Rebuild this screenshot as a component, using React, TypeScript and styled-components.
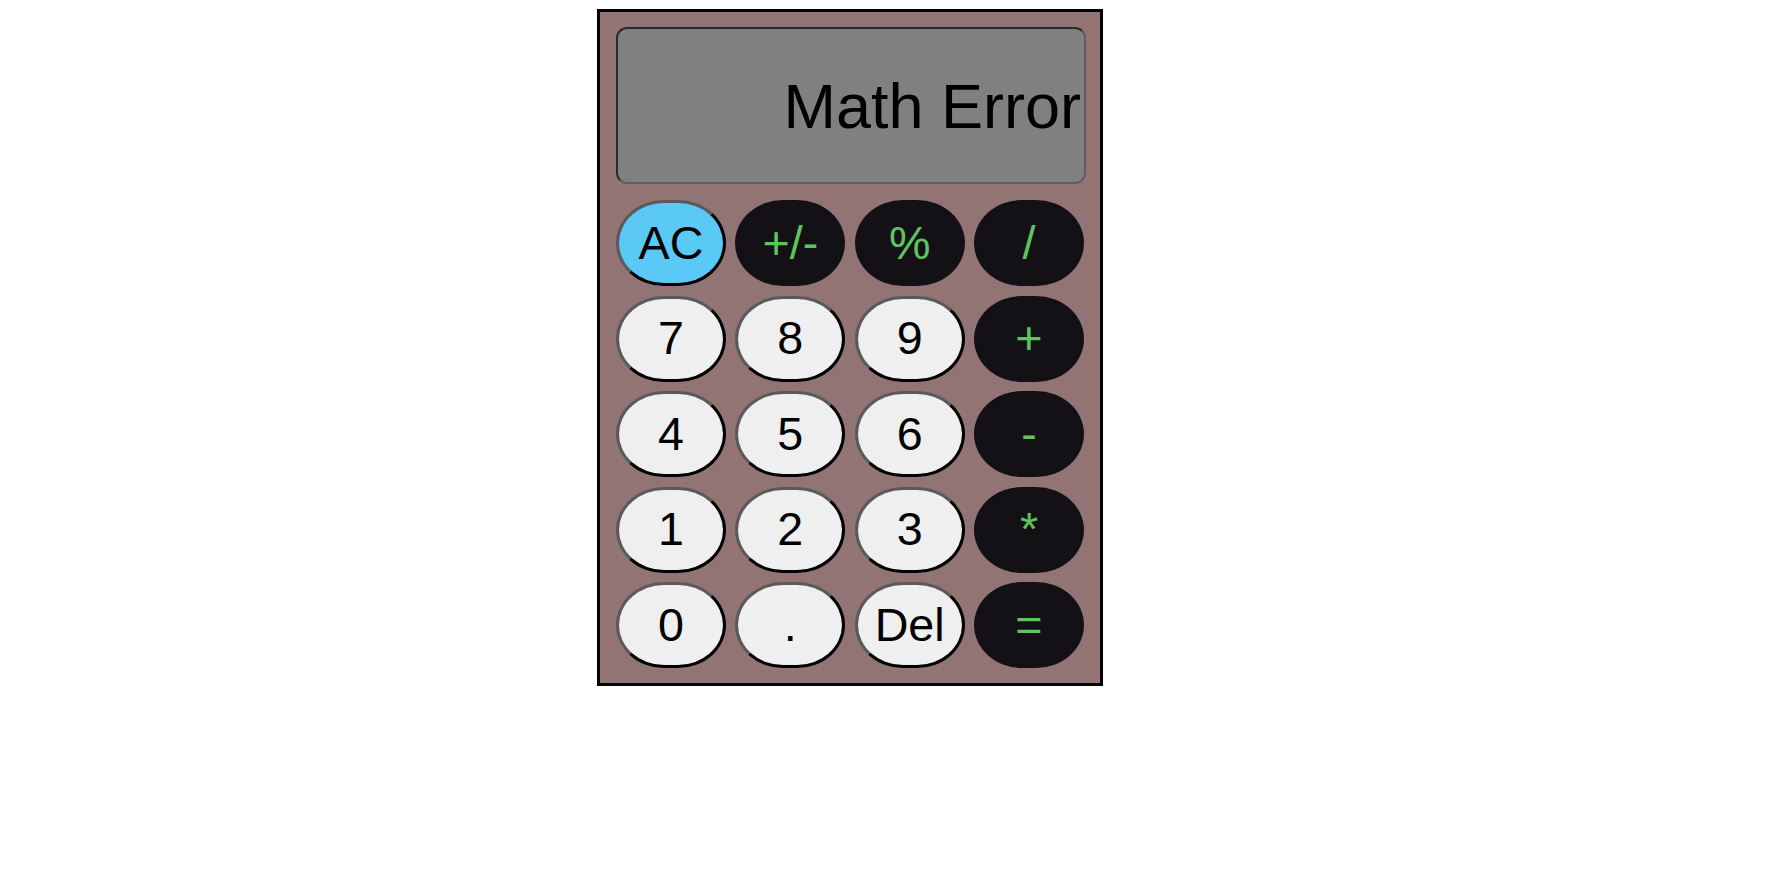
import React from "react";
import styled, { createGlobalStyle } from "styled-components";

const GlobalStyle = createGlobalStyle`
  html, body {
    margin: 0;
    padding: 0;
    background: #ffffff;
  }
  body {
    padding: 9px 0 0 0;
    font-family: "Liberation Sans", Arial, sans-serif;
  }
`;

const Calculator = styled.div`
  box-sizing: border-box;
  margin-left: 597px;
  width: 506px;
  height: 677px;
  border: 3px solid #000;
  background: #917473;
  padding: 15px 14px 14px 16px;
  display: flex;
  flex-direction: column;
  gap: 16px;
`;

const Display = styled.div`
  box-sizing: border-box;
  width: 470px;
  height: 157px;
  background: #808080;
  border-style: solid;
  border-width: 2px;
  border-color: #2a2a2a #5f5f5f #5f5f5f #2a2a2a;
  border-radius: 11px;
  display: flex;
  align-items: center;
  justify-content: flex-end;
  padding: 0 3px 0 4px;
  font-family: "Liberation Sans", Arial, sans-serif;
  font-size: 63px;
  color: #000;
  white-space: nowrap;
  overflow: hidden;
`;

const Keypad = styled.div`
  display: grid;
  grid-template-columns: repeat(4, 110px);
  grid-template-rows: repeat(5, 86px);
  column-gap: 9.33px;
  row-gap: 9.5px;
`;

type Variant = "light" | "dark" | "clear";

const Key = styled.button<{ $variant: Variant }>`
  box-sizing: border-box;
  width: 110px;
  height: 86px;
  margin: 0;
  padding: 0;
  border-radius: 48px / 43px;
  border-width: 3px;
  border-style: solid;
  font-family: "Liberation Sans", Arial, sans-serif;
  font-size: 46.67px;
  line-height: 1;
  display: flex;
  align-items: center;
  justify-content: center;
  cursor: pointer;
  background: ${(p) =>
    p.$variant === "dark" ? "#141116" : p.$variant === "clear" ? "#5bc9f6" : "#efefef"};
  color: ${(p) => (p.$variant === "dark" ? "#5ec55e" : "#000")};
  border-color: ${(p) =>
    p.$variant === "dark" ? "#141116" : "#5a5a5a #000 #000 #5a5a5a"};
`;

const keys: { label: string; variant: Variant }[] = [
  { label: "AC", variant: "clear" },
  { label: "+/-", variant: "dark" },
  { label: "%", variant: "dark" },
  { label: "/", variant: "dark" },
  { label: "7", variant: "light" },
  { label: "8", variant: "light" },
  { label: "9", variant: "light" },
  { label: "+", variant: "dark" },
  { label: "4", variant: "light" },
  { label: "5", variant: "light" },
  { label: "6", variant: "light" },
  { label: "-", variant: "dark" },
  { label: "1", variant: "light" },
  { label: "2", variant: "light" },
  { label: "3", variant: "light" },
  { label: "*", variant: "dark" },
  { label: "0", variant: "light" },
  { label: ".", variant: "light" },
  { label: "Del", variant: "light" },
  { label: "=", variant: "dark" },
];

export default function App() {
  return (
    <>
      <GlobalStyle />
      <Calculator>
        <Display>Math Error</Display>
        <Keypad>
          {keys.map((k) => (
            <Key key={k.label} $variant={k.variant} type="button">
              {k.label}
            </Key>
          ))}
        </Keypad>
      </Calculator>
    </>
  );
}
